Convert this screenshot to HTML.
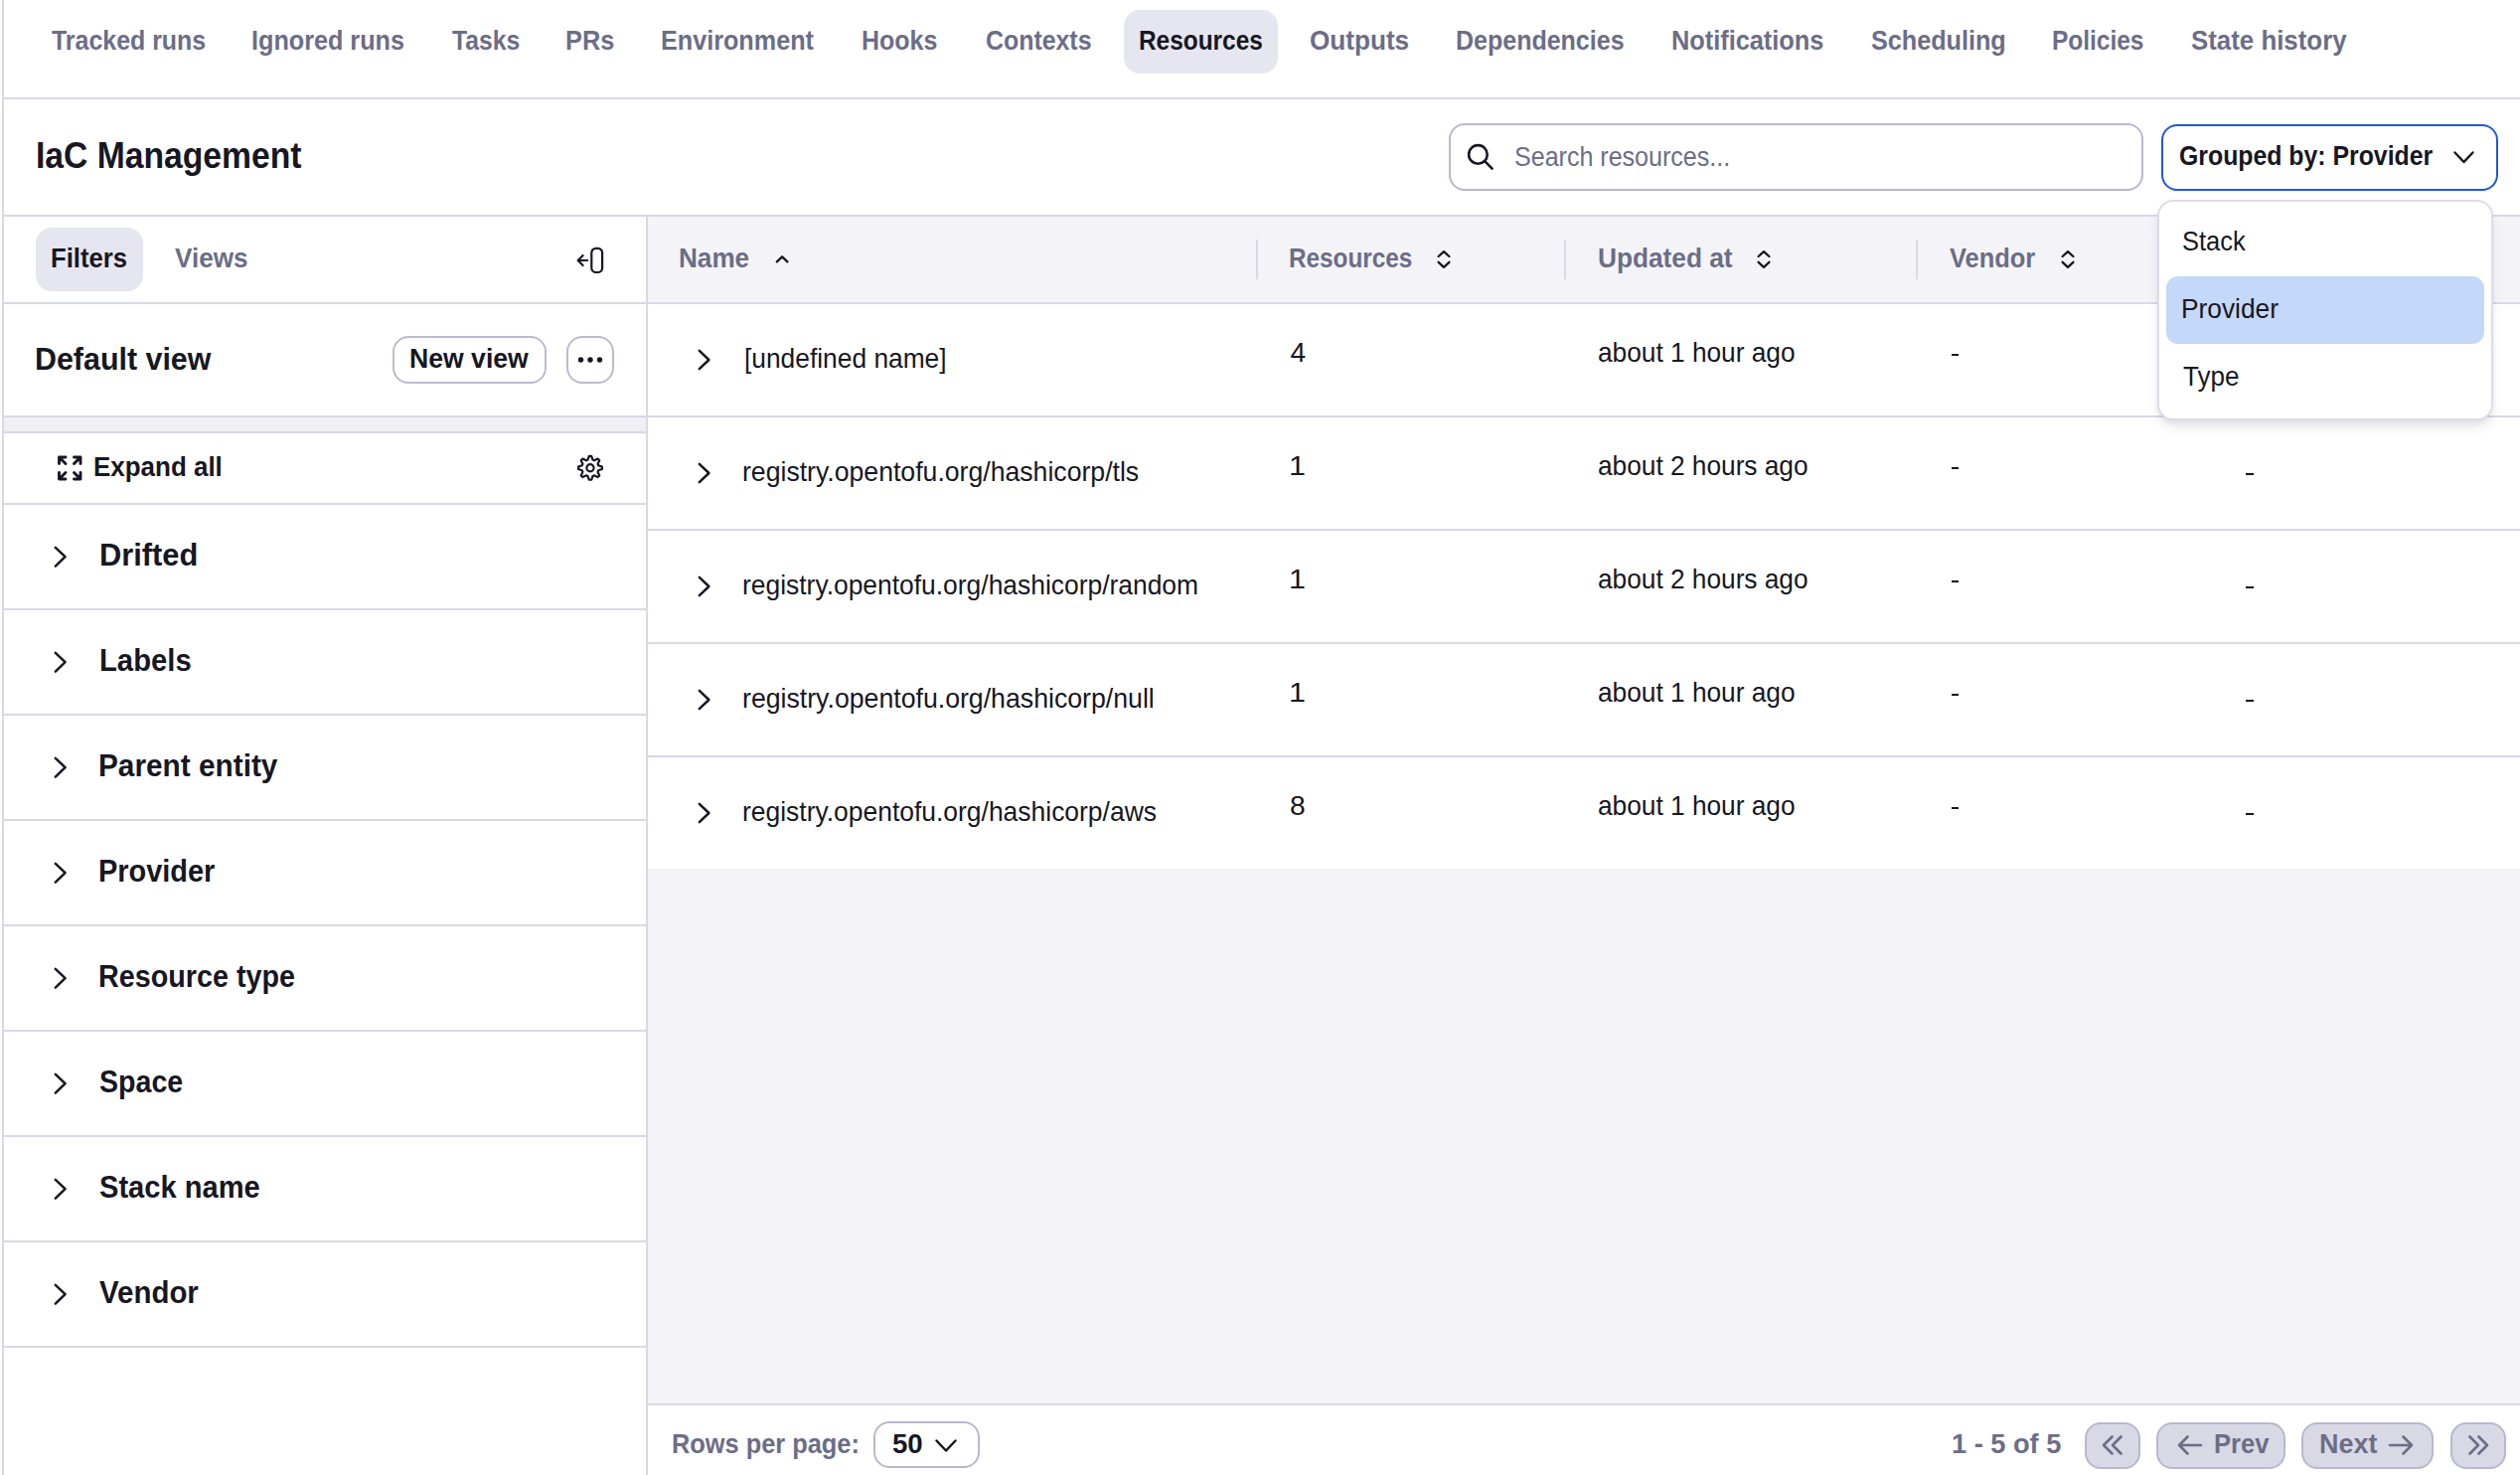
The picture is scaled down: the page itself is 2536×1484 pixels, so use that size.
<!DOCTYPE html><html><head><meta charset="utf-8"><style>
html,body{margin:0;padding:0;background:#fff;}
body{width:2536px;height:1484px;position:relative;overflow:hidden;font-family:"Liberation Sans",sans-serif;}
.bx{position:absolute;}
.tx{position:absolute;white-space:nowrap;transform-origin:0 0;}
.bm{display:inline-block;width:0;height:0;vertical-align:baseline;}
svg{position:absolute;left:0;top:0;}
</style></head><body><div class="bx" style="left:2.0px;top:0.0px;width:2.0px;height:1484.0px;background:#d9d8e6"></div><div class="bx" style="left:4.0px;top:98.0px;width:2532.0px;height:2.0px;background:#d9d8e6"></div><div class="bx" style="left:1131.0px;top:10.0px;width:155.0px;height:64.0px;background:#e6e6f0;border-radius:16px"></div><div class="bx" style="left:4.0px;top:216.0px;width:2532.0px;height:2.0px;background:#d9d8e6"></div><div class="bx" style="left:1458.0px;top:124.0px;width:699.0px;height:67.5px;border:2px solid #b9b8cc;border-radius:16px;box-sizing:border-box"></div><div class="bx" style="left:2174.5px;top:124.5px;width:339.0px;height:67.0px;border:2px solid #2257d8;border-radius:16px;box-sizing:border-box"></div><div class="bx" style="left:650.0px;top:218.0px;width:2.0px;height:1266.0px;background:#d9d8e6"></div><div class="bx" style="left:36.0px;top:229.0px;width:108.0px;height:64.0px;background:#e6e6f0;border-radius:16px"></div><div class="bx" style="left:4.0px;top:304.0px;width:646.0px;height:2.0px;background:#d9d8e6"></div><div class="bx" style="left:4.0px;top:418.0px;width:646.0px;height:2.0px;background:#d9d8e6"></div><div class="bx" style="left:4.0px;top:434.0px;width:646.0px;height:2.0px;background:#d9d8e6"></div><div class="bx" style="left:4.0px;top:506.0px;width:646.0px;height:2.0px;background:#d9d8e6"></div><div class="bx" style="left:4.0px;top:612.0px;width:646.0px;height:2.0px;background:#d9d8e6"></div><div class="bx" style="left:4.0px;top:718.0px;width:646.0px;height:2.0px;background:#d9d8e6"></div><div class="bx" style="left:4.0px;top:824.0px;width:646.0px;height:2.0px;background:#d9d8e6"></div><div class="bx" style="left:4.0px;top:930.0px;width:646.0px;height:2.0px;background:#d9d8e6"></div><div class="bx" style="left:4.0px;top:1036.0px;width:646.0px;height:2.0px;background:#d9d8e6"></div><div class="bx" style="left:4.0px;top:1142.0px;width:646.0px;height:2.0px;background:#d9d8e6"></div><div class="bx" style="left:4.0px;top:1248.0px;width:646.0px;height:2.0px;background:#d9d8e6"></div><div class="bx" style="left:4.0px;top:1354.0px;width:646.0px;height:2.0px;background:#d9d8e6"></div><div class="bx" style="left:4.0px;top:420.0px;width:646.0px;height:14.0px;background:#efeff4"></div><div class="bx" style="left:395.0px;top:338.0px;width:155.0px;height:47.6px;border:2px solid #bcbbce;border-radius:16px;box-sizing:border-box"></div><div class="bx" style="left:570.4px;top:338.0px;width:47.3px;height:47.6px;border:2px solid #bcbbce;border-radius:16px;box-sizing:border-box"></div><div class="bx" style="left:652.0px;top:218.0px;width:1884.0px;height:86.0px;background:#f4f4f8"></div><div class="bx" style="left:652.0px;top:304.0px;width:1884.0px;height:2.0px;background:#d9d8e6"></div><div class="bx" style="left:1264.0px;top:241.0px;width:2.0px;height:40.0px;background:#d9d8e6"></div><div class="bx" style="left:1574.0px;top:241.0px;width:2.0px;height:40.0px;background:#d9d8e6"></div><div class="bx" style="left:1928.0px;top:241.0px;width:2.0px;height:40.0px;background:#d9d8e6"></div><div class="bx" style="left:2282.0px;top:241.0px;width:2.0px;height:40.0px;background:#d9d8e6"></div><div class="bx" style="left:652.0px;top:418.0px;width:1884.0px;height:2.0px;background:#d9d8e6"></div><div class="bx" style="left:652.0px;top:532.0px;width:1884.0px;height:2.0px;background:#d9d8e6"></div><div class="bx" style="left:652.0px;top:646.0px;width:1884.0px;height:2.0px;background:#d9d8e6"></div><div class="bx" style="left:652.0px;top:760.0px;width:1884.0px;height:2.0px;background:#d9d8e6"></div><div class="bx" style="left:652.0px;top:874.0px;width:1884.0px;height:538.0px;background:#f4f4f8"></div><div class="bx" style="left:652.0px;top:1412.0px;width:1884.0px;height:2.0px;background:#d9d8e6"></div><div class="bx" style="left:879.0px;top:1430.3px;width:106.8px;height:46.7px;border:2px solid #b9b8cc;border-radius:16px;box-sizing:border-box"></div><div class="bx" style="left:2098.3px;top:1430.5px;width:55.4px;height:47.0px;background:#d9d9e5;border:2px solid #b9b8cc;border-radius:16px;box-sizing:border-box"></div><div class="bx" style="left:2170.0px;top:1430.5px;width:130.0px;height:47.0px;background:#d9d9e5;border:2px solid #b9b8cc;border-radius:16px;box-sizing:border-box"></div><div class="bx" style="left:2316.4px;top:1430.5px;width:133.1px;height:47.0px;background:#d9d9e5;border:2px solid #b9b8cc;border-radius:16px;box-sizing:border-box"></div><div class="bx" style="left:2466.0px;top:1430.5px;width:55.8px;height:47.0px;background:#d9d9e5;border:2px solid #b9b8cc;border-radius:16px;box-sizing:border-box"></div><div class="bx" style="left:1963.6px;top:356.0px;width:7.9px;height:2.2px;background:#171723"></div><div class="bx" style="left:2260.0px;top:362.0px;width:8.0px;height:2.2px;background:#171723"></div><div class="bx" style="left:1963.6px;top:470.0px;width:7.9px;height:2.2px;background:#171723"></div><div class="bx" style="left:2260.0px;top:476.0px;width:8.0px;height:2.2px;background:#171723"></div><div class="bx" style="left:1963.6px;top:584.0px;width:7.9px;height:2.2px;background:#171723"></div><div class="bx" style="left:2260.0px;top:590.0px;width:8.0px;height:2.2px;background:#171723"></div><div class="bx" style="left:1963.6px;top:698.0px;width:7.9px;height:2.2px;background:#171723"></div><div class="bx" style="left:2260.0px;top:704.0px;width:8.0px;height:2.2px;background:#171723"></div><div class="bx" style="left:1963.6px;top:812.0px;width:7.9px;height:2.2px;background:#171723"></div><div class="bx" style="left:2260.0px;top:818.0px;width:8.0px;height:2.2px;background:#171723"></div><svg width="2536" height="1484" viewBox="0 0 2536 1484"><circle cx="1487.4" cy="155.4" r="9.3" fill="none" stroke="#171723" stroke-width="2.6"/><path d="M1494.2 162.2 L1501.6 169.6" fill="none" stroke="#171723" stroke-width="2.60" stroke-linecap="round" stroke-linejoin="round" /><path d="M2470.5 153.5 L2479.5 163 L2488.5 153.5" fill="none" stroke="#171723" stroke-width="2.50" stroke-linecap="round" stroke-linejoin="round" /><path d="M781.8 263.4 L787.1 258.3 L792.4 263.4" fill="none" stroke="#171723" stroke-width="2.30" stroke-linecap="round" stroke-linejoin="round" /><path d="M1447.6 258 L1453.0 253.2 L1458.4 258" fill="none" stroke="#171723" stroke-width="2.30" stroke-linecap="round" stroke-linejoin="round" /><path d="M1447.6 263.8 L1453.0 268.8 L1458.4 263.8" fill="none" stroke="#171723" stroke-width="2.30" stroke-linecap="round" stroke-linejoin="round" /><path d="M1769.6 258 L1775.0 253.2 L1780.4 258" fill="none" stroke="#171723" stroke-width="2.30" stroke-linecap="round" stroke-linejoin="round" /><path d="M1769.6 263.8 L1775.0 268.8 L1780.4 263.8" fill="none" stroke="#171723" stroke-width="2.30" stroke-linecap="round" stroke-linejoin="round" /><path d="M2075.6 258 L2081.0 253.2 L2086.4 258" fill="none" stroke="#171723" stroke-width="2.30" stroke-linecap="round" stroke-linejoin="round" /><path d="M2075.6 263.8 L2081.0 268.8 L2086.4 263.8" fill="none" stroke="#171723" stroke-width="2.30" stroke-linecap="round" stroke-linejoin="round" /><path d="M703.8 352.8 L713.4 362.0 L703.8 371.2" fill="none" stroke="#171723" stroke-width="2.50" stroke-linecap="round" stroke-linejoin="round" /><path d="M703.8 466.8 L713.4 476.0 L703.8 485.2" fill="none" stroke="#171723" stroke-width="2.50" stroke-linecap="round" stroke-linejoin="round" /><path d="M703.8 580.8 L713.4 590.0 L703.8 599.2" fill="none" stroke="#171723" stroke-width="2.50" stroke-linecap="round" stroke-linejoin="round" /><path d="M703.8 694.8 L713.4 704.0 L703.8 713.2" fill="none" stroke="#171723" stroke-width="2.50" stroke-linecap="round" stroke-linejoin="round" /><path d="M703.8 808.8 L713.4 818.0 L703.8 827.2" fill="none" stroke="#171723" stroke-width="2.50" stroke-linecap="round" stroke-linejoin="round" /><path d="M55.8 550.8 L65.6 560.2 L55.8 569.6" fill="none" stroke="#171723" stroke-width="2.50" stroke-linecap="round" stroke-linejoin="round" /><path d="M55.8 656.8 L65.6 666.2 L55.8 675.6" fill="none" stroke="#171723" stroke-width="2.50" stroke-linecap="round" stroke-linejoin="round" /><path d="M55.8 762.8 L65.6 772.2 L55.8 781.6" fill="none" stroke="#171723" stroke-width="2.50" stroke-linecap="round" stroke-linejoin="round" /><path d="M55.8 868.8 L65.6 878.2 L55.8 887.6" fill="none" stroke="#171723" stroke-width="2.50" stroke-linecap="round" stroke-linejoin="round" /><path d="M55.8 974.8 L65.6 984.2 L55.8 993.6" fill="none" stroke="#171723" stroke-width="2.50" stroke-linecap="round" stroke-linejoin="round" /><path d="M55.8 1080.8 L65.6 1090.2 L55.8 1099.6" fill="none" stroke="#171723" stroke-width="2.50" stroke-linecap="round" stroke-linejoin="round" /><path d="M55.8 1186.8 L65.6 1196.2 L55.8 1205.6" fill="none" stroke="#171723" stroke-width="2.50" stroke-linecap="round" stroke-linejoin="round" /><path d="M55.8 1292.8 L65.6 1302.2 L55.8 1311.6" fill="none" stroke="#171723" stroke-width="2.50" stroke-linecap="round" stroke-linejoin="round" /><rect x="595.3" y="249.8" width="10.8" height="24.2" rx="4.6" fill="none" stroke="#171723" stroke-width="2.2"/><path d="M591.2 262 L582 262 M586.6 257 L581.6 262 L586.6 267" fill="none" stroke="#171723" stroke-width="2.20" stroke-linecap="round" stroke-linejoin="round" /><path d="M59.5 466.5 L59.5 460 L66 460 M60.5 461 L66 466.5" fill="none" stroke="#171723" stroke-width="2.90" stroke-linecap="round" stroke-linejoin="round" /><path d="M74.5 460 L81 460 L81 466.5 M80 461 L74.5 466.5" fill="none" stroke="#171723" stroke-width="2.90" stroke-linecap="round" stroke-linejoin="round" /><path d="M59.5 475.5 L59.5 482 L66 482 M60.5 481 L66 475.5" fill="none" stroke="#171723" stroke-width="2.90" stroke-linecap="round" stroke-linejoin="round" /><path d="M74.5 482 L81 482 L81 475.5 M80 481 L74.5 475.5" fill="none" stroke="#171723" stroke-width="2.90" stroke-linecap="round" stroke-linejoin="round" /><path d="M592.82 458.86 L595.18 458.86 L596.50 462.57 L598.05 463.22 L601.61 461.52 L603.28 463.19 L601.58 466.75 L602.23 468.30 L605.94 469.62 L605.94 471.98 L602.23 473.30 L601.58 474.85 L603.28 478.41 L601.61 480.08 L598.05 478.38 L596.50 479.03 L595.18 482.74 L592.82 482.74 L591.50 479.03 L589.95 478.38 L586.39 480.08 L584.72 478.41 L586.42 474.85 L585.77 473.30 L582.06 471.98 L582.06 469.62 L585.77 468.30 L586.42 466.75 L584.72 463.19 L586.39 461.52 L589.95 463.22 L591.50 462.57 Z" fill="none" stroke="#171723" stroke-width="2.20" stroke-linecap="round" stroke-linejoin="round" /><circle cx="594.0" cy="470.8" r="3.6" fill="none" stroke="#171723" stroke-width="2.2"/><circle cx="584.5" cy="362" r="2.7" fill="#171723"/><circle cx="594.0" cy="362" r="2.7" fill="#171723"/><circle cx="603.5" cy="362" r="2.7" fill="#171723"/><path d="M942.5 1449.5 L952 1459.5 L961.5 1449.5" fill="none" stroke="#171723" stroke-width="2.50" stroke-linecap="round" stroke-linejoin="round" /><path d="M2125.5 1445.5 L2117 1454 L2125.5 1462.5 M2134.5 1445.5 L2126 1454 L2134.5 1462.5" fill="none" stroke="#6c6d87" stroke-width="2.70" stroke-linecap="round" stroke-linejoin="round" /><path d="M2215 1454 L2193 1454 M2201.5 1445.5 L2193 1454 L2201.5 1462.5" fill="none" stroke="#6c6d87" stroke-width="2.70" stroke-linecap="round" stroke-linejoin="round" /><path d="M2405 1454 L2427 1454 M2418.5 1445.5 L2427 1454 L2418.5 1462.5" fill="none" stroke="#6c6d87" stroke-width="2.70" stroke-linecap="round" stroke-linejoin="round" /><path d="M2485.5 1445.5 L2494 1454 L2485.5 1462.5 M2494.5 1445.5 L2503 1454 L2494.5 1462.5" fill="none" stroke="#6c6d87" stroke-width="2.70" stroke-linecap="round" stroke-linejoin="round" /></svg><span id="nav0" class="tx" style="left:51.50px;top:27.00px;font-size:28px;line-height:28px;font-weight:bold;letter-spacing:0.000px;transform:scaleX(0.8902);color:#6c6d87">Tracked runs</span><span id="nav1" class="tx" style="left:252.50px;top:27.00px;font-size:28px;line-height:28px;font-weight:bold;letter-spacing:0.000px;transform:scaleX(0.8994);color:#6c6d87">Ignored runs</span><span id="nav2" class="tx" style="left:454.50px;top:27.00px;font-size:28px;line-height:28px;font-weight:bold;letter-spacing:0.000px;transform:scaleX(0.8816);color:#6c6d87">Tasks</span><span id="nav3" class="tx" style="left:568.50px;top:27.00px;font-size:28px;line-height:28px;font-weight:bold;letter-spacing:0.000px;transform:scaleX(0.9043);color:#6c6d87">PRs</span><span id="nav4" class="tx" style="left:664.50px;top:27.00px;font-size:28px;line-height:28px;font-weight:bold;letter-spacing:0.000px;transform:scaleX(0.8994);color:#6c6d87">Environment</span><span id="nav5" class="tx" style="left:866.50px;top:27.00px;font-size:28px;line-height:28px;font-weight:bold;letter-spacing:0.000px;transform:scaleX(0.8916);color:#6c6d87">Hooks</span><span id="nav6" class="tx" style="left:991.50px;top:27.00px;font-size:28px;line-height:28px;font-weight:bold;letter-spacing:0.000px;transform:scaleX(0.8890);color:#6c6d87">Contexts</span><span id="nav7" class="tx" style="left:1146.00px;top:27.00px;font-size:28px;line-height:28px;font-weight:bold;letter-spacing:0.000px;transform:scaleX(0.8715);color:#171723">Resources</span><span id="nav8" class="tx" style="left:1317.50px;top:27.00px;font-size:28px;line-height:28px;font-weight:bold;letter-spacing:0.000px;transform:scaleX(0.9333);color:#6c6d87">Outputs</span><span id="nav9" class="tx" style="left:1464.50px;top:27.00px;font-size:28px;line-height:28px;font-weight:bold;letter-spacing:0.000px;transform:scaleX(0.8930);color:#6c6d87">Dependencies</span><span id="nav10" class="tx" style="left:1681.50px;top:27.00px;font-size:28px;line-height:28px;font-weight:bold;letter-spacing:0.000px;transform:scaleX(0.9042);color:#6c6d87">Notifications</span><span id="nav11" class="tx" style="left:1882.50px;top:27.00px;font-size:28px;line-height:28px;font-weight:bold;letter-spacing:0.000px;transform:scaleX(0.8994);color:#6c6d87">Scheduling</span><span id="nav12" class="tx" style="left:2064.50px;top:27.00px;font-size:28px;line-height:28px;font-weight:bold;letter-spacing:0.000px;transform:scaleX(0.8738);color:#6c6d87">Policies</span><span id="nav13" class="tx" style="left:2204.50px;top:27.00px;font-size:28px;line-height:28px;font-weight:bold;letter-spacing:0.000px;transform:scaleX(0.9232);color:#6c6d87">State history</span><span id="title" class="tx" style="left:35.50px;top:139.01px;font-size:36px;line-height:36px;font-weight:bold;letter-spacing:0.000px;transform:scaleX(0.9352);color:#171723">IaC Management</span><span id="search" class="tx" style="left:1524.00px;top:144.00px;font-size:28px;line-height:28px;font-weight:normal;letter-spacing:0.000px;transform:scaleX(0.8946);color:#6c6d87">Search resources...</span><span id="group" class="tx" style="left:2192.50px;top:143.00px;font-size:28px;line-height:28px;font-weight:bold;letter-spacing:0.000px;transform:scaleX(0.8867);color:#171723">Grouped by: Provider</span><span id="filters" class="tx" style="left:51.00px;top:246.00px;font-size:28px;line-height:28px;font-weight:bold;letter-spacing:0.000px;transform:scaleX(0.9161);color:#171723">Filters</span><span id="views" class="tx" style="left:175.50px;top:246.00px;font-size:28px;line-height:28px;font-weight:bold;letter-spacing:0.000px;transform:scaleX(0.9328);color:#6c6d87">Views</span><span id="defview" class="tx" style="left:35.00px;top:344.51px;font-size:32px;line-height:32px;font-weight:bold;letter-spacing:0.000px;transform:scaleX(0.9503);color:#171723">Default view</span><span id="newview" class="tx" style="left:411.50px;top:347.41px;font-size:28px;line-height:28px;font-weight:bold;letter-spacing:0.000px;transform:scaleX(0.9505);color:#171723">New view</span><span id="expand" class="tx" style="left:93.50px;top:456.00px;font-size:28px;line-height:28px;font-weight:bold;letter-spacing:0.000px;transform:scaleX(0.9271);color:#171723">Expand all</span><span id="sec0" class="tx" style="left:99.50px;top:542.01px;font-size:32px;line-height:32px;font-weight:bold;letter-spacing:0.000px;transform:scaleX(0.9636);color:#171723">Drifted</span><span id="sec1" class="tx" style="left:99.50px;top:648.01px;font-size:32px;line-height:32px;font-weight:bold;letter-spacing:0.000px;transform:scaleX(0.9143);color:#171723">Labels</span><span id="sec2" class="tx" style="left:99.00px;top:754.01px;font-size:32px;line-height:32px;font-weight:bold;letter-spacing:0.000px;transform:scaleX(0.9309);color:#171723">Parent entity</span><span id="sec3" class="tx" style="left:99.00px;top:860.01px;font-size:32px;line-height:32px;font-weight:bold;letter-spacing:0.000px;transform:scaleX(0.9040);color:#171723">Provider</span><span id="sec4" class="tx" style="left:99.00px;top:966.01px;font-size:32px;line-height:32px;font-weight:bold;letter-spacing:0.000px;transform:scaleX(0.8977);color:#171723">Resource type</span><span id="sec5" class="tx" style="left:99.50px;top:1072.01px;font-size:32px;line-height:32px;font-weight:bold;letter-spacing:0.000px;transform:scaleX(0.8926);color:#171723">Space</span><span id="sec6" class="tx" style="left:99.50px;top:1178.01px;font-size:32px;line-height:32px;font-weight:bold;letter-spacing:0.000px;transform:scaleX(0.9091);color:#171723">Stack name</span><span id="sec7" class="tx" style="left:99.50px;top:1284.01px;font-size:32px;line-height:32px;font-weight:bold;letter-spacing:0.000px;transform:scaleX(0.9204);color:#171723">Vendor</span><span id="h_name" class="tx" style="left:683.00px;top:246.00px;font-size:28px;line-height:28px;font-weight:bold;letter-spacing:0.000px;transform:scaleX(0.9325);color:#6c6d87">Name</span><span id="h_res" class="tx" style="left:1297.00px;top:246.00px;font-size:28px;line-height:28px;font-weight:bold;letter-spacing:0.000px;transform:scaleX(0.8686);color:#6c6d87">Resources</span><span id="h_upd" class="tx" style="left:1607.50px;top:246.00px;font-size:28px;line-height:28px;font-weight:bold;letter-spacing:0.000px;transform:scaleX(0.9371);color:#6c6d87">Updated at</span><span id="h_ven" class="tx" style="left:1961.50px;top:246.00px;font-size:28px;line-height:28px;font-weight:bold;letter-spacing:0.000px;transform:scaleX(0.9086);color:#6c6d87">Vendor</span><span id="rn0" class="tx" style="left:748.50px;top:347.00px;font-size:28px;line-height:28px;font-weight:normal;letter-spacing:0.000px;transform:scaleX(0.9409);color:#171723">[undefined name]</span><span id="rr0" class="tx" style="left:1298.50px;top:341.41px;font-size:28px;line-height:28px;font-weight:normal;letter-spacing:0.000px;transform:scaleX(1.0000);color:#171723">4</span><span id="ru0" class="tx" style="left:1607.50px;top:341.41px;font-size:28px;line-height:28px;font-weight:normal;letter-spacing:0.000px;transform:scaleX(0.9378);color:#171723">about 1 hour ago</span><span id="rn1" class="tx" style="left:746.50px;top:461.00px;font-size:28px;line-height:28px;font-weight:normal;letter-spacing:0.000px;transform:scaleX(0.9511);color:#171723">registry.opentofu.org/hashicorp/tls</span><span id="rr1" class="tx" style="left:1296.50px;top:455.41px;font-size:28px;line-height:28px;font-weight:normal;letter-spacing:0.000px;transform:scaleX(1.0889);color:#171723">1</span><span id="ru1" class="tx" style="left:1607.50px;top:455.41px;font-size:28px;line-height:28px;font-weight:normal;letter-spacing:0.000px;transform:scaleX(0.9372);color:#171723">about 2 hours ago</span><span id="rn2" class="tx" style="left:746.50px;top:575.00px;font-size:28px;line-height:28px;font-weight:normal;letter-spacing:0.000px;transform:scaleX(0.9433);color:#171723">registry.opentofu.org/hashicorp/random</span><span id="rr2" class="tx" style="left:1296.50px;top:569.41px;font-size:28px;line-height:28px;font-weight:normal;letter-spacing:0.000px;transform:scaleX(1.0889);color:#171723">1</span><span id="ru2" class="tx" style="left:1607.50px;top:569.41px;font-size:28px;line-height:28px;font-weight:normal;letter-spacing:0.000px;transform:scaleX(0.9372);color:#171723">about 2 hours ago</span><span id="rn3" class="tx" style="left:746.50px;top:689.00px;font-size:28px;line-height:28px;font-weight:normal;letter-spacing:0.000px;transform:scaleX(0.9528);color:#171723">registry.opentofu.org/hashicorp/null</span><span id="rr3" class="tx" style="left:1296.50px;top:683.41px;font-size:28px;line-height:28px;font-weight:normal;letter-spacing:0.000px;transform:scaleX(1.0889);color:#171723">1</span><span id="ru3" class="tx" style="left:1607.50px;top:683.41px;font-size:28px;line-height:28px;font-weight:normal;letter-spacing:0.000px;transform:scaleX(0.9378);color:#171723">about 1 hour ago</span><span id="rn4" class="tx" style="left:746.50px;top:803.00px;font-size:28px;line-height:28px;font-weight:normal;letter-spacing:0.000px;transform:scaleX(0.9444);color:#171723">registry.opentofu.org/hashicorp/aws</span><span id="rr4" class="tx" style="left:1297.50px;top:797.41px;font-size:28px;line-height:28px;font-weight:normal;letter-spacing:0.000px;transform:scaleX(1.0051);color:#171723">8</span><span id="ru4" class="tx" style="left:1607.50px;top:797.41px;font-size:28px;line-height:28px;font-weight:normal;letter-spacing:0.000px;transform:scaleX(0.9378);color:#171723">about 1 hour ago</span><span id="rpp" class="tx" style="left:675.50px;top:1439.00px;font-size:28px;line-height:28px;font-weight:bold;letter-spacing:0.000px;transform:scaleX(0.9059);color:#6c6d87">Rows per page:</span><span id="fifty" class="tx" style="left:897.50px;top:1439.00px;font-size:28px;line-height:28px;font-weight:bold;letter-spacing:0.000px;transform:scaleX(0.9866);color:#171723">50</span><span id="count" class="tx" style="left:1963.50px;top:1439.00px;font-size:28px;line-height:28px;font-weight:bold;letter-spacing:0.000px;transform:scaleX(0.9712);color:#6c6d87">1 - 5 of 5</span><span id="prev" class="tx" style="left:2227.50px;top:1439.00px;font-size:28px;line-height:28px;font-weight:bold;letter-spacing:0.000px;transform:scaleX(0.9119);color:#6c6d87">Prev</span><span id="next" class="tx" style="left:2333.50px;top:1439.00px;font-size:28px;line-height:28px;font-weight:bold;letter-spacing:0.000px;transform:scaleX(0.9628);color:#6c6d87">Next</span><div class="bx" style="left:2170.5px;top:200.5px;width:338.1px;height:222.0px;background:#fff;border:2px solid #dddce9;border-radius:16px;box-sizing:border-box;box-shadow:0 4px 6px -1px rgba(40,40,80,0.10), 0 10px 15px -3px rgba(40,40,80,0.08)"></div><div class="bx" style="left:2180.0px;top:278.0px;width:320.0px;height:68.0px;background:#c4d8fa;border-radius:12px"></div><span id="dd0" class="tx" style="left:2195.50px;top:229.41px;font-size:28px;line-height:28px;font-weight:normal;letter-spacing:0.000px;transform:scaleX(0.9092);color:#171723">Stack</span><span id="dd1" class="tx" style="left:2194.50px;top:297.00px;font-size:28px;line-height:28px;font-weight:normal;letter-spacing:0.000px;transform:scaleX(0.9393);color:#171723">Provider</span><span id="dd2" class="tx" style="left:2196.50px;top:365.00px;font-size:28px;line-height:28px;font-weight:normal;letter-spacing:0.000px;transform:scaleX(0.9289);color:#171723">Type</span></body></html>
